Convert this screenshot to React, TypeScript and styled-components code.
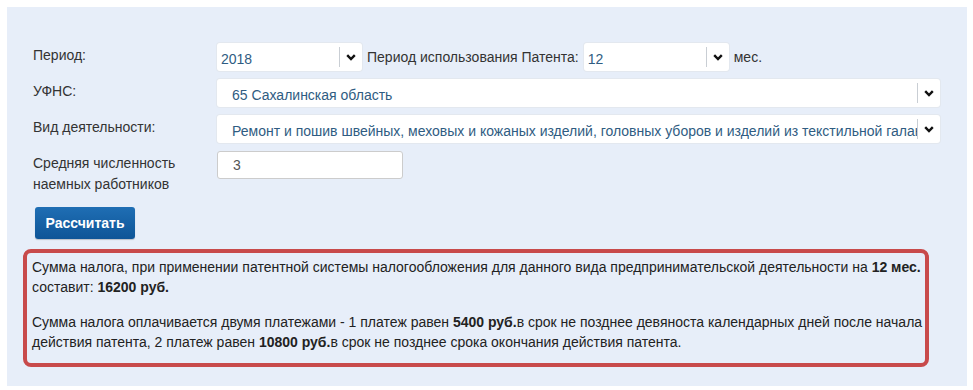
import React from 'react'
import styled, { createGlobalStyle } from 'styled-components'

const GlobalStyle = createGlobalStyle`
  body {
    margin: 0;
    background: #ffffff;
    font-family: 'Liberation Sans', Arial, sans-serif;
  }
`

const Panel = styled.div`
  margin: 7px 6px 5px 7px;
  width: 960px;
  box-sizing: border-box;
  background: #e7eef9;
  padding: 36px 26px 19px 16px;
`

const Form = styled.div`
  display: grid;
  grid-template-columns: 184px 1fr;
  row-gap: 8px;
  padding-left: 10px;
  width: 917px;
  box-sizing: border-box;
`

const Label = styled.div`
  font-size: 14px;
  line-height: 21px;
  color: #333333;
  padding-top: 2px;
`

const Line = styled.div`
  display: flex;
  align-items: center;
  gap: 5px;
  font-size: 14px;
  color: #333333;
`

const SelectBox = styled.div<{ $width?: number }>`
  display: flex;
  align-items: center;
  height: 28px;
  width: ${({ $width }) => ($width ? `${$width}px` : '100%')};
  box-sizing: border-box;
  background: #ffffff;
  border-radius: 3px;
  box-shadow: 0 0 0 1px #e3e8ef;
  font-size: 14px;
  color: #2f5c82;
  overflow: hidden;
`

const SelectValue = styled.span<{ $indent?: number }>`
  flex: 1;
  padding-left: ${({ $indent }) => $indent ?? 4}px;
  padding-top: 3px;
  white-space: nowrap;
  overflow: hidden;
`

const Arrow = styled.span`
  display: flex;
  align-items: center;
  justify-content: center;
  width: 22px;
  height: 20px;
  border-left: 1px solid #c9ced4;
  flex: none;
`

const TextInput = styled.div`
  width: 186px;
  height: 28px;
  box-sizing: border-box;
  background: #ffffff;
  border: 1px solid #cccccc;
  border-radius: 3px;
  font-size: 14px;
  color: #555555;
  padding: 5px 0 0 15px;
`

const Button = styled.button`
  margin: 12px 0 0 12px;
  width: 100px;
  height: 32px;
  border: none;
  border-radius: 3px;
  background: linear-gradient(#1f6eb4, #0e5597);
  color: #ffffff;
  font-family: 'Liberation Sans', Arial, sans-serif;
  font-size: 14px;
  font-weight: bold;
  box-shadow: 0 1px 1px rgba(0, 0, 0, 0.2);
`

const Result = styled.div`
  margin-top: 10px;
  width: 906px;
  box-sizing: border-box;
  border: 4px solid #c84a4b;
  border-radius: 8px;
  padding: 4px 0 11px 5px;
  font-size: 14px;
  line-height: 20px;
  color: #222222;

  p {
    margin: 0 0 15px;
  }
  p:last-child {
    margin-bottom: 0;
  }
`

const Chevron = () => (
  <svg width="10" height="7" viewBox="0 0 10 7">
    <path d="M1.2 1.2 L5 5 L8.8 1.2" fill="none" stroke="#111" strokeWidth="2.4" />
  </svg>
)

const Select: React.FC<{ value: string; width?: number; indent?: number }> = ({ value, width, indent }) => (
  <SelectBox $width={width}>
    <SelectValue $indent={indent}>{value}</SelectValue>
    <Arrow>
      <Chevron />
    </Arrow>
  </SelectBox>
)

const App: React.FC = () => (
  <>
    <GlobalStyle />
    <Panel>
      <Form>
        <Label>Период:</Label>
        <Line>
          <Select value="2018" width={145} />
          <span>Период использования Патента:</span>
          <Select value="12" width={145} />
          <span>мес.</span>
        </Line>
        <Label>УФНС:</Label>
        <Select value="65 Сахалинская область" indent={15} />
        <Label>Вид деятельности:</Label>
        <Select
          value="Ремонт и пошив швейных, меховых и кожаных изделий, головных уборов и изделий из текстильной галантереи"
          indent={15}
        />
        <Label>
          Средняя численность
          <br />
          наемных работников
        </Label>
        <div>
          <TextInput>3</TextInput>
        </div>
      </Form>
      <Button>Рассчитать</Button>
      <Result>
        <p>
          Сумма налога, при применении патентной системы налогообложения для данного вида предпринимательской
          деятельности на <b>12 мес.</b> составит: <b>16200 руб.</b>
        </p>
        <p>
          Сумма налога оплачивается двумя платежами - 1 платеж равен <b>5400 руб.</b>в срок не позднее девяноста
          календарных дней после начала действия патента, 2 платеж равен <b>10800 руб.</b>в срок не позднее срока
          окончания действия патента.
        </p>
      </Result>
    </Panel>
  </>
)

export default App
